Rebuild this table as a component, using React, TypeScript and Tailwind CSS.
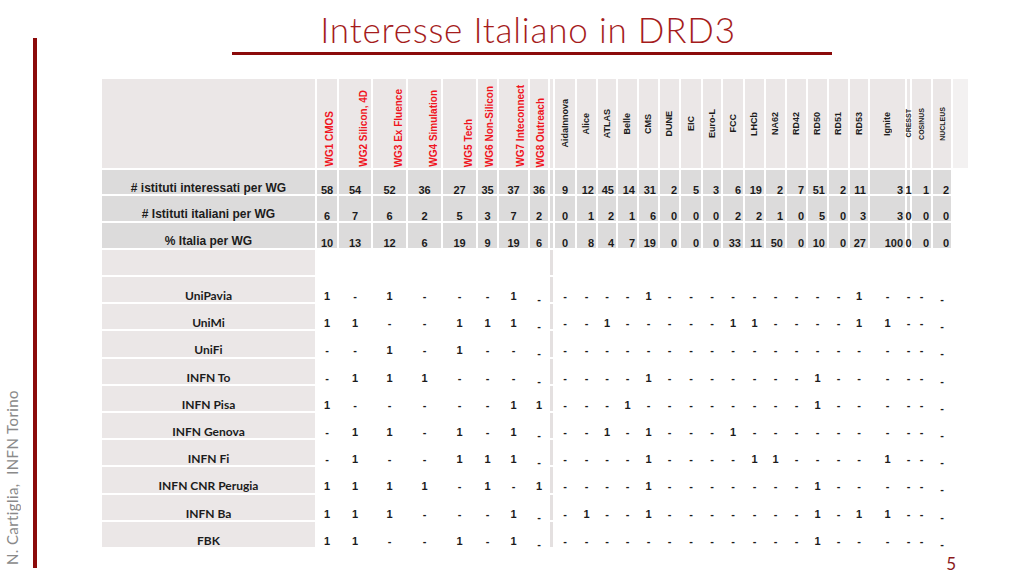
import * as React from "react";

const WG = ["WG1 CMOS", "WG2 Silicon, 4D", "WG3 Ex Fluence", "WG4 Simulation", "WG5 Tech", "WG6 Non-Silicon", "WG7 Inteconnect", "WG8 Outreach"];

const EXP = [
  { name: "AidaInnova" },
  { name: "Alice" },
  { name: "ATLAS" },
  { name: "Belle" },
  { name: "CMS" },
  { name: "DUNE" },
  { name: "EIC" },
  { name: "Euro-L" },
  { name: "FCC" },
  { name: "LHCb" },
  { name: "NA62" },
  { name: "RD42" },
  { name: "RD50" },
  { name: "RD51" },
  { name: "RD53" },
  { name: "Ignite" },
  { name: "CRESST", small: true },
  { name: "COSINUS", small: true },
  { name: "NUCLEUS", small: true },
];

const TOP = [
  {
    label: "# istituti interessati per WG",
    wg: ["58", "54", "52", "36", "27", "35", "37", "36"],
    ex: ["9", "12", "45", "14", "31", "2", "5", "3", "6", "19", "2", "7", "51", "2", "11", "3", "1", "1", "2"],
  },
  {
    label: "# Istituti italiani per WG",
    wg: ["6", "7", "6", "2", "5", "3", "7", "2"],
    ex: ["0", "1", "2", "1", "6", "0", "0", "0", "2", "2", "1", "0", "5", "0", "3", "3", "0", "0", "0"],
  },
  {
    label: "% Italia per WG",
    wg: ["10", "13", "12", "6", "19", "9", "19", "6"],
    ex: ["0", "8", "4", "7", "19", "0", "0", "0", "33", "11", "50", "0", "10", "0", "27", "100", "0", "0", "0"],
  },
];

const ROWS = [
  { name: "UniPavia", wg: "1-1---1-", ex: "----1---------1----" },
  { name: "UniMi", wg: "11--111-", ex: "--1-----11----11---" },
  { name: "UniFi", wg: "--1-1---", ex: "-------------------" },
  { name: "INFN To", wg: "-111----", ex: "----1-------1------" },
  { name: "INFN Pisa", wg: "1-----11", ex: "---1--------1------" },
  { name: "INFN Genova", wg: "-11-1-1-", ex: "--1-1---1----------" },
  { name: "INFN Fi", wg: "-1--111-", ex: "----1----11----1---" },
  { name: "INFN CNR Perugia", wg: "1111-1-1", ex: "----1-------1------" },
  { name: "INFN Ba", wg: "111---1-", ex: "-1--1-------1-11---" },
  { name: "FBK", wg: "11--1-1-", ex: "------------1------" },
];

const cell = "border-r-2 border-b-2 border-white flex overflow-visible";

function Mark({ v, low }: { v: string; low?: boolean }) {
  return <span className={low && v === "-" ? "translate-y-[3px]" : ""}>{v}</span>;
}

export default function App() {
  return (
    <div className="w-[1024px] h-[576px] bg-white flex overflow-hidden font-['Liberation_Sans',Arial,sans-serif]">
      {/* footer gutter */}
      <div className="w-[33px] flex flex-col justify-end items-start pl-[4px] pb-[11px]">
        <span className="[writing-mode:vertical-rl] rotate-180 text-[15px] leading-[16px] text-[#8a8a8a] font-['Lato',sans-serif] tracking-[0.4px]">
          N. Cartiglia,&nbsp; INFN Torino
        </span>
      </div>
      <div className="w-[4px] bg-[#8b0a0a] mt-[38px] mb-[8px]" />

      <div className="flex-1 flex flex-col">
        <div className="pt-[12px] pr-[5px] text-center">
          <h1 className="text-[35px] leading-[35px] text-[#a51c1c] font-['Lato',sans-serif] font-light tracking-[0.8px]">
            Interesse Italiano in DRD3
          </h1>
        </div>
        <div className="ml-[195px] w-[600px] h-[3px] bg-[#8b0a0a] mt-[5px]" />

        <div className="ml-[65px] mt-[24px] grid grid-cols-[215px_22px_34px_35px_35px_35px_21px_31px_20px_5px_22px_21px_20px_21px_21px_21px_22px_20px_22px_21px_21px_21px_21px_21px_20px_37px_5px_21px_20px_15px] grid-rows-[91px_26px_27px_27px_27px_repeat(10,27.2px)] text-[#1c1c1c]">
          {/* header */}
          <div className={`${cell} bg-[#ebe7e7]`} />
          {WG.map((w) => (
            <div key={w} className={`${cell} bg-[#ebe7e7] justify-end items-end pr-[2px] pb-[1px]`}>
              <span className="[writing-mode:vertical-rl] rotate-180 text-[10px] leading-[10px] font-bold text-[#f0141e] whitespace-nowrap">
                {w}
              </span>
            </div>
          ))}
          <div className={`${cell} bg-[#ebe7e7]`} />
          {EXP.map((e) => (
            <div key={e.name} className={`${cell} bg-[#ebe7e7] justify-center items-center`}>
              <span
                className={`[writing-mode:vertical-rl] rotate-180 font-bold whitespace-nowrap ${
                  e.small ? "text-[7px] leading-[7px]" : "text-[9px] leading-[9px]"
                }`}
              >
                {e.name}
              </span>
            </div>
          ))}
          <div className="border-b-2 border-white bg-[#f3f1f1]" />

          {/* summary rows */}
          {TOP.map((r) => (
            <React.Fragment key={r.label}>
              <div className={`${cell} bg-[#dcdbdb] justify-center items-start pt-[12px] text-[12px] leading-[12px] font-bold`}>
                {r.label}
              </div>
              {r.wg.map((v, i) => (
                <div key={"w" + i} className={`${cell} bg-[#dcdbdb] justify-center items-start pt-[15px] text-[11px] leading-[11px] font-bold`}>
                  {v}
                </div>
              ))}
              <div className={`${cell} bg-[#dcdbdb]`} />
              {r.ex.map((v, i) => (
                <div
                  key={"e" + i}
                  className={`${cell} bg-[#dcdbdb] items-start pt-[15px] text-[11px] leading-[11px] font-bold ${
                    i === 0 || i === 16 ? "justify-center" : "justify-end pr-[2px]"
                  }`}
                >
                  {v}
                </div>
              ))}
              <div className="border-b-2 border-white" />
            </React.Fragment>
          ))}

          {/* empty row */}
          <div className={`${cell} bg-[#ebe7e7]`} />
          {WG.map((w) => (
            <div key={"x" + w} className={cell} />
          ))}
          <div className={`${cell} bg-[#e4e0e0]`} />
          {EXP.map((e) => (
            <div key={"x" + e.name} className={cell} />
          ))}
          <div />

          {/* institutes */}
          {ROWS.map((r) => (
            <React.Fragment key={r.name}>
              <div className={`${cell} bg-[#ebe7e7] justify-center items-start pt-[13px] text-[12px] leading-[12px] font-bold font-['Lato',sans-serif]`}>
                {r.name}
              </div>
              {r.wg.split("").map((v, i) => (
                <div key={"w" + i} className={`${cell} justify-center items-start pt-[14px] text-[11px] leading-[11px] font-bold`}>
                  <Mark v={v} low={i === 7} />
                </div>
              ))}
              <div className={`${cell} bg-[#e4e0e0]`} />
              {r.ex.split("").map((v, i) => (
                <div key={"e" + i} className={`${cell} justify-center items-start pt-[14px] text-[11px] leading-[11px] font-bold`}>
                  <Mark v={v} low={i === 18} />
                </div>
              ))}
              <div />
            </React.Fragment>
          ))}
        </div>

        <div className="flex justify-end pr-[68px] mt-[6px]">
          <span className="text-[17px] leading-[17px] text-[#8b1a1a] font-['Lato',sans-serif]">5</span>
        </div>
      </div>
    </div>
  );
}
